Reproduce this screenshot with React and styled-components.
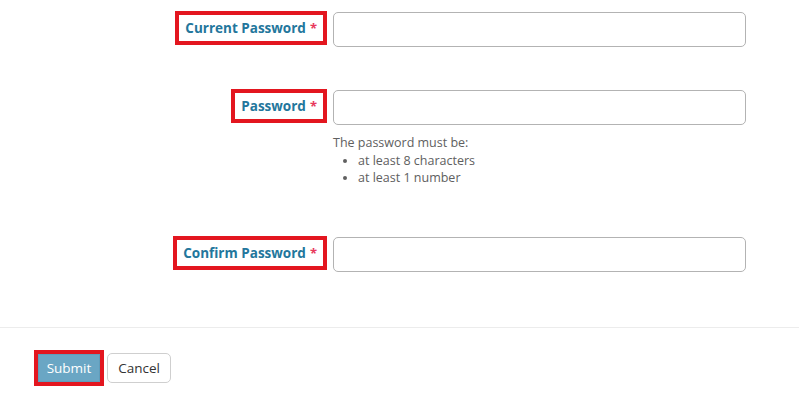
import React from "react";
import styled, { createGlobalStyle } from "styled-components";

const Global = createGlobalStyle`
  html, body { margin: 0; padding: 0; background: #fff; }
  body { font-family: "Open Sans", "Liberation Sans", sans-serif; }
  * { box-sizing: border-box; }
`;

const Page = styled.div`
  width: 799px;
  height: 406px;
  background: #fff;
  display: flex;
  flex-direction: column;
`;

const Form = styled.div`
  padding-top: 12px;
  display: flex;
  flex-direction: column;
`;

const FieldRow = styled.div`
  display: grid;
  grid-template-columns: 327px 413px;
  column-gap: 6px;
  align-items: start;
  margin-top: ${(p) => p.$mt || 0}px;
`;

const LabelCell = styled.div`
  display: flex;
  justify-content: flex-end;
  align-items: center;
  height: 35px;
  padding-bottom: 3px;
`;

const Highlight = styled.div`
  border: 4px solid #e3161f;
  display: inline-flex;
  align-items: center;
`;

const Label = styled.label`
  display: flex;
  align-items: center;
  height: 26px;
  padding: 0 6px 0 6px;
  font-size: 13.5px;
  font-weight: 700;
  color: #23769c;
  white-space: nowrap;
`;

const Required = styled.span`
  color: #e8395c;
  margin-left: 4px;
  font-size: 13px;
`;

const InputCell = styled.div`
  display: flex;
  flex-direction: column;
`;

const Input = styled.input`
  width: 413px;
  height: 35px;
  border: 1px solid #b3b3b3;
  border-radius: 5px;
  background: #fff;
  outline: none;
`;

const Help = styled.div`
  margin-top: 9px;
  font-size: 12.5px;
  color: #606060;
  line-height: 17.5px;
`;

const HelpList = styled.ul`
  margin: 0;
  padding-left: 25px;
  li::marker { font-size: 11px; }
`;

const Divider = styled.hr`
  margin: 55px 0 0 0;
  border: none;
  border-top: 1px solid #ececec;
  width: 100%;
`;

const Footer = styled.div`
  display: flex;
  align-items: center;
  gap: 3px;
  padding: 22px 0 0 34px;
`;

const ButtonHighlight = styled.div`
  border: 4px solid #e3161f;
  display: inline-flex;
`;

const Button = styled.button`
  font-family: "Open Sans", "Liberation Sans", sans-serif;
  font-size: 13.5px;
  border-radius: ${(p) => (p.$primary ? "0" : "5px")};
  height: ${(p) => (p.$primary ? "28px" : "30px")};
  width: ${(p) => (p.$primary ? "62px" : "64px")};
  border: 1px solid ${(p) => (p.$primary ? "#5f9dbb" : "#cfcfcf")};
  background: ${(p) => (p.$primary ? "#6aa6c4" : "#fff")};
  color: ${(p) => (p.$primary ? "#fff" : "#333")};
  padding: 0;
  cursor: pointer;
`;

function Field({ label, mt, children }) {
  return (
    <FieldRow $mt={mt}>
      <LabelCell>
        <Highlight>
          <Label>
            {label}
            <Required>*</Required>
          </Label>
        </Highlight>
      </LabelCell>
      <InputCell>
        <Input type="password" />
        {children}
      </InputCell>
    </FieldRow>
  );
}

export default function App() {
  return (
    <Page>
      <Global />
      <Form>
        <Field label="Current Password" />
        <Field label="Password" mt={43}>
          <Help>
            The password must be:
            <HelpList>
              <li>at least 8 characters</li>
              <li>at least 1 number</li>
            </HelpList>
          </Help>
        </Field>
        <Field label="Confirm Password" mt={50} />
      </Form>
      <Divider />
      <Footer>
        <ButtonHighlight>
          <Button $primary>Submit</Button>
        </ButtonHighlight>
        <Button>Cancel</Button>
      </Footer>
    </Page>
  );
}
